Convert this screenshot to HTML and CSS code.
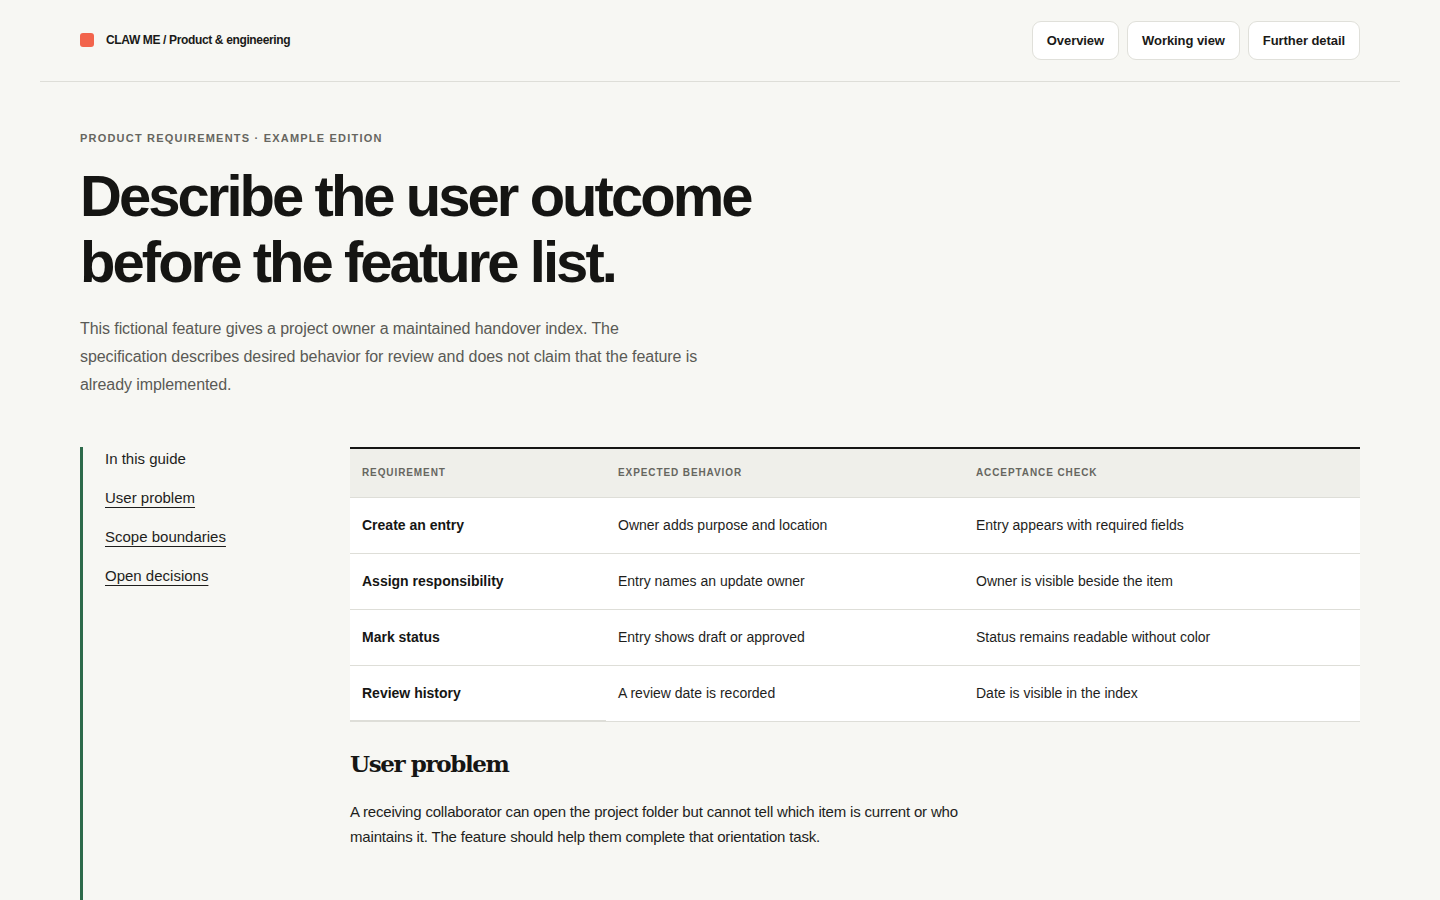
FILE: index.html
```html
<!DOCTYPE html>
<html lang="en">
<head>
<meta charset="utf-8">
<title>CLAW ME / Product &amp; engineering</title>
<link rel="stylesheet" href="styles.css">
</head>
<body>
<header class="topbar">
  <div class="brand">
    <span class="brand-mark"></span>
    <span class="brand-name">CLAW ME / Product &amp; engineering</span>
  </div>
  <nav class="views">
    <a class="view-btn" href="#">Overview</a>
    <a class="view-btn" href="#">Working view</a>
    <a class="view-btn" href="#">Further detail</a>
  </nav>
</header>

<main class="page">
  <section class="intro">
    <p class="eyebrow">Product requirements · Example edition</p>
    <h1 class="title">Describe the user outcome before the feature list.</h1>
    <p class="lede">This fictional feature gives a project owner a maintained handover index. The specification describes desired behavior for review and does not claim that the feature is already implemented.</p>
  </section>

  <div class="layout">
    <aside class="guide">
      <p class="guide-title">In this guide</p>
      <a class="guide-link" href="#problem">User problem</a>
      <a class="guide-link" href="#scope">Scope boundaries</a>
      <a class="guide-link" href="#decisions">Open decisions</a>
    </aside>

    <div class="content">
      <table class="req-table">
        <thead>
          <tr>
            <th class="col-req">Requirement</th>
            <th class="col-beh">Expected behavior</th>
            <th class="col-acc">Acceptance check</th>
          </tr>
        </thead>
        <tbody>
          <tr>
            <td class="req">Create an entry</td>
            <td>Owner adds purpose and location</td>
            <td>Entry appears with required fields</td>
          </tr>
          <tr>
            <td class="req">Assign responsibility</td>
            <td>Entry names an update owner</td>
            <td>Owner is visible beside the item</td>
          </tr>
          <tr>
            <td class="req">Mark status</td>
            <td>Entry shows draft or approved</td>
            <td>Status remains readable without color</td>
          </tr>
          <tr class="last">
            <td class="req">Review history</td>
            <td>A review date is recorded</td>
            <td>Date is visible in the index</td>
          </tr>
        </tbody>
      </table>

      <section class="section" id="problem">
        <h2 class="section-title">User problem</h2>
        <p class="section-text">A receiving collaborator can open the project folder but cannot tell which item is current or who maintains it. The feature should help them complete that orientation task.</p>
      </section>

      <section class="section" id="scope">
        <h2 class="section-title">Scope boundaries</h2>
        <p class="section-text">The first release covers entries, owners, status and review dates. Permissions, notifications and automated imports stay outside this specification.</p>
      </section>

      <section class="section" id="decisions">
        <h2 class="section-title">Open decisions</h2>
        <p class="section-text">The team still needs to agree how often entries should be reviewed and who approves a change of owner.</p>
      </section>
    </div>
  </div>
</main>
</body>
</html>
```

FILE: styles.css
```css
* {
  box-sizing: border-box;
}

html, body {
  margin: 0;
  padding: 0;
}

body {
  background: #f7f7f3;
  color: #161614;
  font-family: "Liberation Sans", Arial, sans-serif;
}

a {
  color: inherit;
}

/* Header */
.topbar {
  margin: 0 40px;
  padding: 0 40px;
  height: 82px;
  border-bottom: 1px solid #deded8;
  display: flex;
  align-items: center;
  justify-content: space-between;
}

.brand {
  display: flex;
  align-items: center;
  gap: 12px;
  margin-top: -2px;
}

.brand-mark {
  width: 14px;
  height: 14px;
  border-radius: 3px;
  background: #f2644c;
}

.brand-name {
  font-size: 12px;
  font-weight: 700;
  letter-spacing: -0.03em;
  color: #1a1a18;
}

.views {
  display: flex;
  gap: 8px;
  margin-top: -1px;
}

.view-btn {
  display: inline-flex;
  align-items: center;
  height: 39px;
  padding: 0 14px;
  background: #ffffff;
  border: 1px solid #e0e0da;
  border-radius: 9px;
  font-size: 13px;
  font-weight: 700;
  letter-spacing: -0.005em;
  text-decoration: none;
  color: #1a1a18;
}

/* Intro */
.page {
  padding: 0 80px 120px;
}

.intro {
  padding-top: 49px;
}

.eyebrow {
  margin: 0;
  font-size: 11px;
  line-height: 14px;
  font-weight: 700;
  text-transform: uppercase;
  letter-spacing: 0.11em;
  color: #66665f;
}

.title {
  margin: 18px 0 0;
  max-width: 720px;
  font-size: 58px;
  line-height: 66px;
  font-weight: 700;
  letter-spacing: -0.051em;
  color: #151513;
}

.lede {
  margin: 20px 0 0;
  max-width: 625px;
  font-size: 16px;
  line-height: 28px;
  letter-spacing: -0.005em;
  color: #5a5a55;
}

/* Body layout */
.layout {
  margin-top: 48px;
  display: grid;
  grid-template-columns: 270px 1fr;
  align-items: stretch;
}

.guide {
  border-left: 3px solid #2d6a4a;
  padding-left: 22px;
  display: flex;
  flex-direction: column;
  align-items: flex-start;
  gap: 15px;
}

.guide-title {
  margin: 0;
  font-size: 15px;
  line-height: 24px;
  letter-spacing: 0;
  color: #1e1e1c;
}

.guide-link {
  font-size: 15px;
  line-height: 24px;
  letter-spacing: 0;
  color: #1e1e1c;
  text-decoration: underline;
  text-decoration-thickness: 1px;
  text-underline-offset: 4px;
}

/* Table */
.req-table {
  width: 100%;
  border-collapse: collapse;
  border-top: 2px solid #161614;
  font-size: 14px;
}

.req-table th {
  height: 49px;
  padding: 0 12px;
  background: #efefea;
  text-align: left;
  font-size: 10px;
  font-weight: 700;
  text-transform: uppercase;
  letter-spacing: 0.09em;
  color: #66665f;
  border-bottom: 1px solid #deded8;
}

.col-req { width: 256px; }
.col-beh { width: 358px; }

.req-table td {
  height: 56px;
  padding: 0 12px;
  background: #ffffff;
  border-bottom: 1px solid #deded8;
  letter-spacing: 0;
  color: #1e1e1c;
}

.req-table td.req {
  font-weight: 700;
  color: #161614;
}

.req-table tr.last td.req {
  border-bottom: 2px solid #deded8;
}

/* Sections */
.section {
  margin-top: 25px;
}

.section + .section {
  margin-top: 80px;
}

.section-title {
  margin: 0;
  font-family: "DejaVu Serif", "Liberation Serif", serif;
  font-size: 23px;
  line-height: 34px;
  font-weight: 700;
  letter-spacing: -0.06em;
  color: #161614;
}

.section-text {
  margin: 18px 0 0;
  max-width: 620px;
  font-size: 15px;
  line-height: 25px;
  letter-spacing: -0.012em;
  color: #1e1e1c;
}
```
